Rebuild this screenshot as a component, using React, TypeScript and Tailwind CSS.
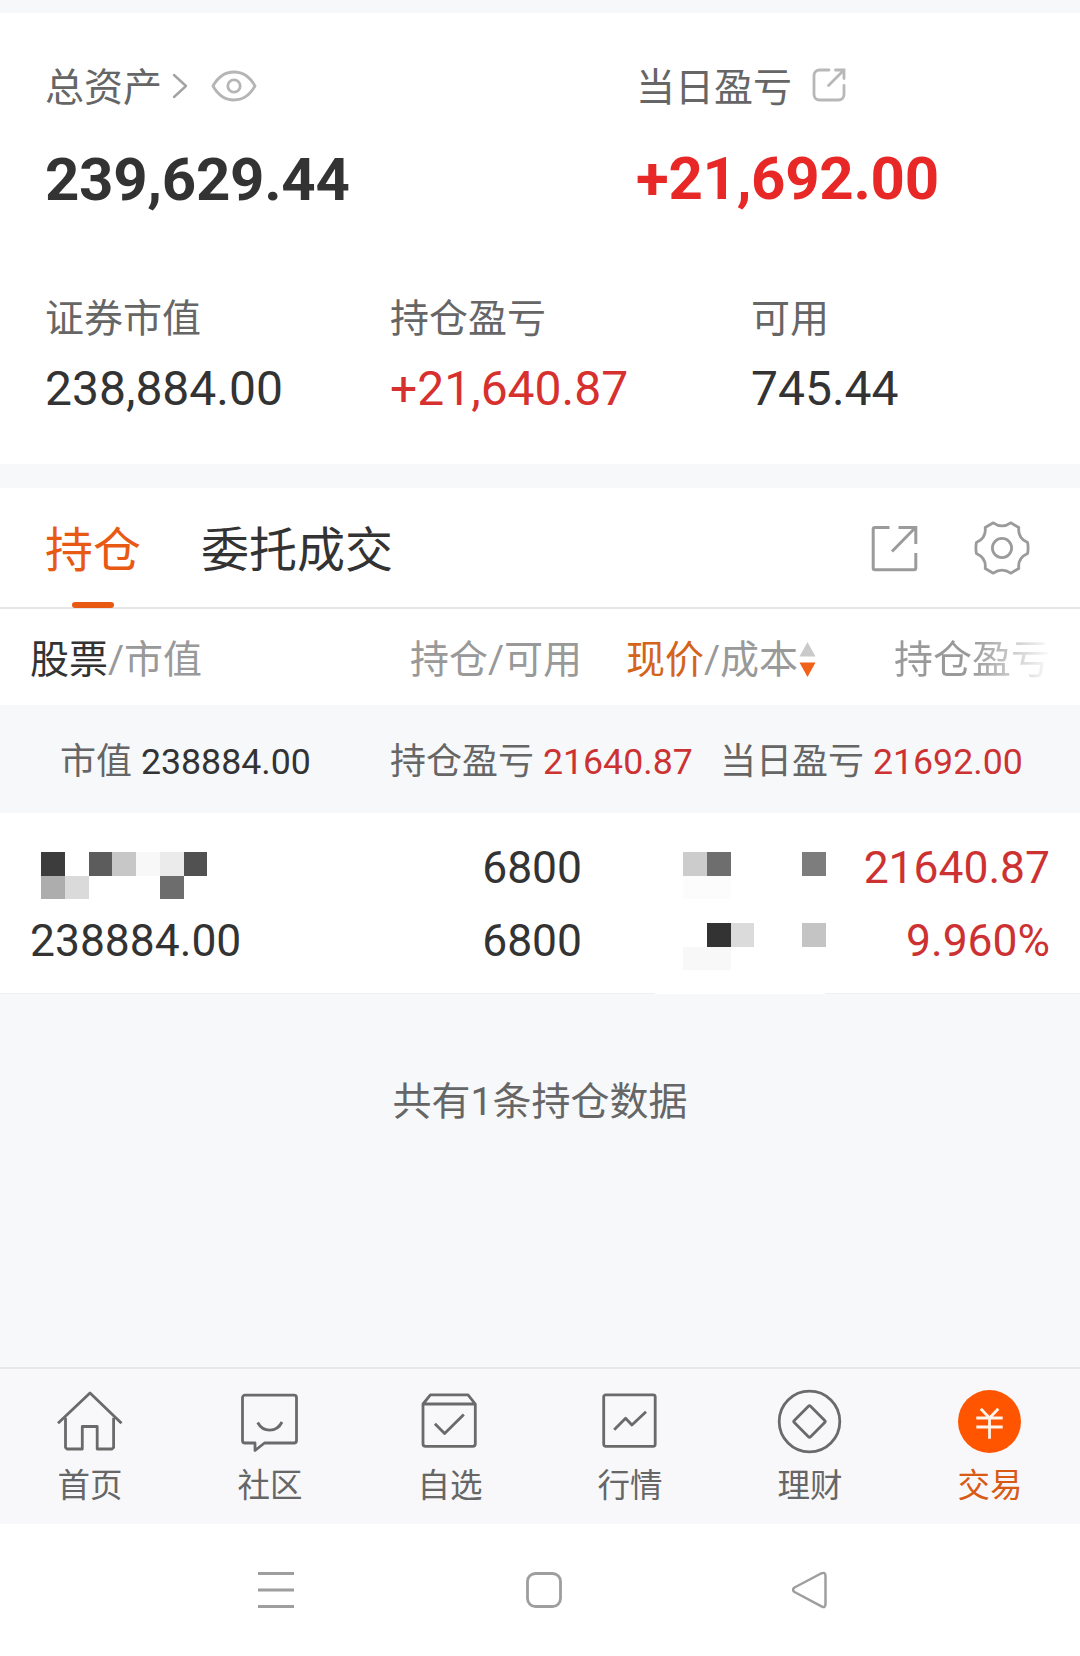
import type { ReactNode } from 'react'
import clsx from 'clsx'

const EXPORT_GRAY = '#b8b8b8'

function EyeIcon() {
  return (
    <svg width="46" height="32" viewBox="0 0 46 32" fill="none" stroke="#b5b5b5" strokeWidth="2.8" strokeLinejoin="round">
      <path d="M2 16C7 7 14 2 23 2s16 5 21 14c-5 9-12 14-21 14S7 25 2 16Z" />
      <circle cx="23" cy="16" r="6.2" />
    </svg>
  )
}

function ChevronIcon() {
  return (
    <svg width="16" height="26" viewBox="0 0 16 26" fill="none" stroke="#a3a3a3" strokeWidth="2.4" strokeLinecap="round" strokeLinejoin="round">
      <path d="M2 2l12 11L2 24" />
    </svg>
  )
}

function SmallExportIcon() {
  return (
    <svg width="34" height="34" viewBox="0 0 34 34" fill="none" stroke={EXPORT_GRAY} strokeWidth="2.8" strokeLinecap="round">
      <path d="M17 2H7.5A5.5 5.5 0 0 0 2 7.5V26.5A5.5 5.5 0 0 0 7.5 32H26.5A5.5 5.5 0 0 0 32 26.5V17.500" />
      <path d="M23.5 2H32V10.5M31.5 2.5L16.5 17.500" />
    </svg>
  )
}

function ExportIcon() {
  return (
    <svg width="47" height="47" viewBox="0 0 47 47" fill="none" stroke="#9b9b9b" strokeWidth="3">
      <path d="M18.5 2.5H4a1.8 1.8 0 0 0-1.8 1.8V43a1.8 1.8 0 0 0 1.8 1.8H43a1.8 1.8 0 0 0 1.8-1.8V28" />
      <path d="M27.5 2.5H44.8V19M44 3L21 26.5" />
    </svg>
  )
}

function GearIcon() {
  return (
    <svg width="56" height="54" viewBox="0 0 56 54" fill="none" stroke="#9b9b9b" strokeWidth="2.8" strokeLinejoin="round">
      <path d="M19.3 1.800Q28 8 36.7 1.800L44.8 6.500Q43.500 17 53.600 21.500Q54.600 27 53.600 32.500Q43.500 37 44.8 47.500L36.700 52.200Q28 46 19.300 52.200L11.200 47.500Q12.500 37 2.400 32.500Q1.400 27 2.400 21.500Q12.500 17 11.200 6.500Z" />
      <circle cx="28" cy="27" r="9.6" />
    </svg>
  )
}

function SortArrows() {
  return (
    <svg width="17" height="36" viewBox="0 0 17 36">
      <path d="M8.5 0L16.5 14.5H.5Z" fill="#cacaca" />
      <path d="M8.5 35L16.5 20.5H.5Z" fill="#f2611a" />
    </svg>
  )
}

// colour per mosaic cell, null is an empty cell
type Cells = (string | null)[][]

const nameMosaic: Cells = [
  ['#3c3c3c', null, '#5c5c5c', '#c7c7c7', '#f8f8f8', '#ebebeb', '#515151'],
  ['#adadad', '#dadada', null, null, null, '#6d6d6d', null],
]

const priceMosaic: Cells = [
  ['#cccccc', '#6e6e6e', null, null, null, '#7d7d7d'],
  ['#fcfcfc', '#fcfcfc', null, null, null, null],
  [null, null, null, null, null, null],
  [null, '#333333', '#dbdbdb', null, null, '#c4c4c4'],
  ['#f8f8f8', '#f8f8f8', null, null, null, null],
]

function Mosaic({ cells }: { cells: Cells }) {
  return (
    <div>
      {cells.map((row, i) => (
        <div key={i} className="flex">
          {row.map((color, j) => (
            <div key={j} className="h-[23.7px] w-[23.75px]" style={{ backgroundColor: color ?? 'transparent' }} />
          ))}
        </div>
      ))}
    </div>
  )
}

function Stat({ label, value, up }: { label: string; value: string; up?: boolean }) {
  return (
    <div>
      <div className="text-[39px] leading-[48px] text-[#666]">{label}</div>
      <div className={clsx('mt-[18px] text-[48px] leading-[56px]', up ? 'text-[#d6302f]' : 'text-[#333]')}>{value}</div>
    </div>
  )
}

function Summary() {
  return (
    <section className="h-[451px] bg-white pt-[49px] pl-[45px]">
      <div className="grid grid-cols-[591px_1fr]">
        <div>
          <div className="flex h-12 items-center text-[39px] leading-[48px] text-[#666]">
            <span className="pt-1">总资产</span>
            <span className="ml-[10px]"><ChevronIcon /></span>
            <span className="ml-[23px]"><EyeIcon /></span>
          </div>
          <div className="mt-[35px] text-[60px] leading-[70px] font-bold tracking-[-0.3px] text-[#333]">239,629.44</div>
        </div>
        <div>
          <div className="flex h-12 items-center text-[39px] leading-[48px] text-[#666]">
            <span className="pt-1">当日盈亏</span>
            <span className="mb-[3px] ml-5"><SmallExportIcon /></span>
          </div>
          <div className="mt-[34px] text-[60px] leading-[70px] font-bold tracking-[-0.3px] text-[#e82727]">+21,692.00</div>
        </div>
      </div>

      <div className="mt-20 grid grid-cols-[345px_361px_1fr]">
        <Stat label="证券市值" value="238,884.00" />
        <Stat label="持仓盈亏" value="+21,640.87" up />
        <Stat label="可用" value="745.44" />
      </div>
    </section>
  )
}

function Tabs() {
  return (
    <div className="flex h-[121px] items-start border-b-2 border-[#e6e6e6] bg-white pr-[50px] pl-[45px]">
      <div className="flex h-[120px] flex-col items-center justify-between pt-[34px] text-[48px] leading-[58px] text-[#e85a13]">
        持仓
        <div className="h-[6px] w-[42px] rounded-full bg-[#e85a13]" />
      </div>
      <div className="ml-[60px] pt-[34px] text-[48px] leading-[58px] text-[#333]">委托成交</div>
      <div className="ml-auto flex items-center gap-[56px] pt-[33px]">
        <ExportIcon />
        <GearIcon />
      </div>
    </div>
  )
}

function TableHead() {
  return (
    <div className="flex h-24 items-center bg-white pt-[5px] pl-[30px] text-[39px] leading-[48px] whitespace-nowrap text-[#999]">
      <div className="w-[380px]">
        <span className="text-[#333]">股票</span>/市值
      </div>
      <div className="w-[216px]">持仓/可用</div>
      <div className="flex w-[268px] items-center">
        <span className="text-[#d4641c]">现价</span>/成本
        <span className="ml-px"><SortArrows /></span>
      </div>
      <div className="bg-linear-to-r from-[#999] from-50% to-transparent to-[102%] bg-clip-text text-transparent">持仓盈亏</div>
    </div>
  )
}

function Totals() {
  return (
    <div className="flex h-[108px] items-center bg-[#f7f8fa] pt-[5px] pl-[60px] text-[36px] leading-[44px] whitespace-nowrap text-[#666]">
      <div className="w-[330px]">
        市值 <span className="text-[35.7px] text-[#333]">238884.00</span>
      </div>
      <div className="w-[330px]">
        持仓盈亏 <span className="text-[35.7px] text-[#cd3232]">21640.87</span>
      </div>
      <div>
        当日盈亏 <span className="text-[35.7px] text-[#cd3232]">21692.00</span>
      </div>
    </div>
  )
}

function HoldingRow() {
  return (
    <div className="relative flex h-[181px] border-b border-[#eff0f2] bg-white pt-[18px] text-[44.4px] leading-[73px] text-[#333]">
      <div className="w-[451px] pl-[30px]">
        <div className="h-[74px] pt-[21px] pl-[11px]"><Mosaic cells={nameMosaic} /></div>
        <div>238884.00</div>
      </div>
      <div className="w-[131px] pt-px text-right">
        <div>6800</div>
        <div>6800</div>
      </div>
      <div className="ml-[101px] pt-[21px]"><Mosaic cells={priceMosaic} /></div>
      <div className="ml-auto pt-px pr-[30px] text-right text-[#cd3232]">
        <div>21640.87</div>
        <div>9.960%</div>
      </div>
      {/* divider is wiped out under the mosaic */}
      <div className="absolute -bottom-px left-[655px] h-px w-[170px] bg-white" />
    </div>
  )
}

const tabs: { label: string; active?: boolean; icon: ReactNode }[] = [
  {
    label: '首页',
    icon: (
      <>
        <path d="M0 34.3L32 4L63.5 34.3" />
        <path d="M7.5 28.7V58.5L9 60H24.3V37.5H39.2V60H54L55.6 58.5V28.7" />
      </>
    ),
  },
  {
    label: '社区',
    icon: (
      <>
        <path d="M7 6.2H56a2.5 2.5 0 0 1 2.5 2.5V51.5a2.5 2.5 0 0 1-2.5 2.5H26.5L17 61.5V54H7a2.5 2.5 0 0 1-2.5-2.5V8.7A2.5 2.5 0 0 1 7 6.2Z" />
        <path d="M19.7 33.5C25 43.5 38.5 44 44 33" />
      </>
    ),
  },
  {
    label: '自选',
    icon: (
      <>
        <path d="M5 15L12.4 5.8H50L57.3 15V54.8a2.5 2.5 0 0 1-2.5 2.5H7.5A2.5 2.5 0 0 1 5 54.8ZM5 15H57.3" />
        <path d="M16.9 34.7L26.6 44.5L45.8 25.5" />
      </>
    ),
  },
  {
    label: '行情',
    icon: (
      <>
        <rect x="5.7" y="5.8" width="51.5" height="51.5" rx="2" />
        <path d="M16.2 40.7L27.6 29.3L33.9 36L48 22.7" />
      </>
    ),
  },
  {
    label: '理财',
    icon: (
      <>
        <circle cx="31.5" cy="32.5" r="30.3" />
        <rect x="20" y="21" width="23" height="23" rx="1.5" transform="rotate(45 31.5 32.5)" />
      </>
    ),
  },
  {
    label: '交易',
    active: true,
    icon: (
      <>
        <circle cx="31.5" cy="32.5" r="31.5" fill="#ff5500" stroke="none" />
        <path stroke="#fff3ea" d="M22.8 19.7L31.5 29L40.3 19.7M31.5 29V49.7M18.3 29H44.7M18.3 38H44.7" />
      </>
    ),
  },
]

function TabBar() {
  return (
    <nav className="grid h-[157px] grid-cols-6 border-t-2 border-[#e8e8ea] bg-[#f8f8fa]">
      {tabs.map((tab) => (
        <div key={tab.label} className="flex flex-col items-center pt-5">
          <svg width="64" height="64" viewBox="0 0 64 64" fill="none" stroke="#6a6a6a" strokeWidth="2.8" strokeLinejoin="round" className="overflow-visible">
            {tab.icon}
          </svg>
          <div className={clsx('mt-[13px] text-[32.5px] leading-[40px]', tab.active ? 'text-[#d85a14]' : 'text-[#666]')}>
            {tab.label}
          </div>
        </div>
      ))}
    </nav>
  )
}

function SystemBar() {
  return (
    <div className="flex h-[132px] items-center bg-white pl-[258px]">
      <svg width="36" height="38" viewBox="0 0 36 38" stroke="#9e9e9e" strokeWidth="3">
        <path d="M0 2.5H36M0 19H36M0 35.5H36" />
      </svg>
      <svg width="36" height="36" viewBox="0 0 36 36" fill="none" stroke="#9e9e9e" strokeWidth="2.8" className="ml-[232px]">
        <rect x="1.5" y="1.5" width="33" height="33" rx="8" />
      </svg>
      <svg width="36" height="38" viewBox="0 0 36 38" fill="none" stroke="#9e9e9e" strokeWidth="2.5" strokeLinejoin="round" className="ml-[230px]">
        <path d="M2.5 16.5L29 2.5Q33.5 .5 33.5 5V33Q33.5 37.5 29.5 35.3L2.5 21Q-.5 18.7 2.5 16.5Z" />
      </svg>
    </div>
  )
}

export default function App() {
  return (
    <div className="flex h-[1656px] w-[1080px] flex-col overflow-hidden bg-[#f7f8fa] pt-[13px] font-['Roboto','Noto_Sans_CJK_SC',sans-serif]">
      <Summary />
      <main className="mt-6 flex-1">
        <Tabs />
        <TableHead />
        <Totals />
        <HoldingRow />
        <p className="mt-[84px] text-center text-[39px] leading-[48px] text-[#666]">共有1条持仓数据</p>
      </main>
      <TabBar />
      <SystemBar />
    </div>
  )
}
